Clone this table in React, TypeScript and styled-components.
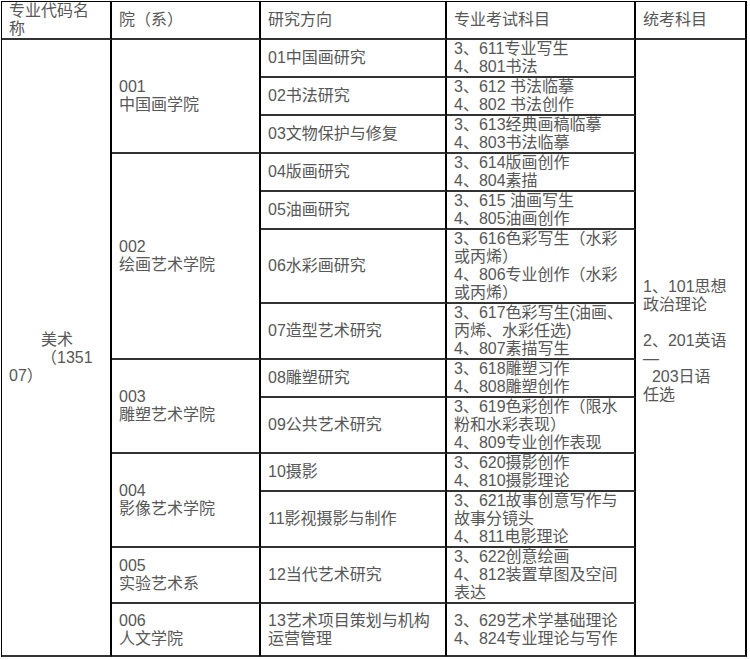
import React, { memo } from 'react';
import styled, { createGlobalStyle } from 'styled-components';

const GlobalStyle = createGlobalStyle`
  * {
    box-sizing: border-box;
  }

  body {
    margin: 0;
    background: #fff;
    font-family: "Liberation Sans", "Noto Sans CJK SC", sans-serif;
  }
`

const Table = styled.table`
  margin: 1px 0 0 1px;
  width: 746px;
  table-layout: fixed;
  border-collapse: separate;
  border-spacing: 0;
  border-top: 1px solid #000;
  border-left: 1px solid #000;
  color: #575757;
  font-size: 16px;
  line-height: 18px;
`

const HeadCell = styled.th<{ $w: number }>`
  width: ${p => p.$w}px;
  padding: 0 7px;
  border-right: 2px solid #000;
  border-bottom: 2px solid #333;
  font-weight: normal;
  text-align: left;
  vertical-align: middle;
`

const Cell = styled.td<{ $shiftTop?: number; $shiftBottom?: number }>`
  padding: ${p => p.$shiftTop || 0}px 7px ${p => p.$shiftBottom || 0}px;
  border-right: 2px solid #000;
  border-bottom: 2px solid #333;
  vertical-align: middle;
  text-align: left;
`

const Row = styled.tr<{ $h?: number }>`
  height: ${p => (p.$h ? `${p.$h}px` : 'auto')};
`

const Line = styled.span<{ $indent?: number }>`
  display: block;
  padding-left: ${p => p.$indent || 0}px;
  min-height: 18px;
`

interface Direction {
  name: string[]
  exams: string[]
}

interface School {
  code: string
  name: string
  directions: Direction[]
}

const schools: School[] = [
  {
    code: '001',
    name: '中国画学院',
    directions: [
      { name: ['01中国画研究'], exams: ['3、611专业写生', '4、801书法'] },
      { name: ['02书法研究'], exams: ['3、612 书法临摹', '4、802 书法创作'] },
      { name: ['03文物保护与修复'], exams: ['3、613经典画稿临摹', '4、803书法临摹'] },
    ],
  },
  {
    code: '002',
    name: '绘画艺术学院',
    directions: [
      { name: ['04版画研究'], exams: ['3、614版画创作', '4、804素描'] },
      { name: ['05油画研究'], exams: ['3、615 油画写生', '4、805油画创作'] },
      { name: ['06水彩画研究'], exams: ['3、616色彩写生（水彩或丙烯）', '4、806专业创作（水彩或丙烯）'] },
      { name: ['07造型艺术研究'], exams: ['3、617色彩写生(油画、丙烯、水彩任选)', '4、807素描写生'] },
    ],
  },
  {
    code: '003',
    name: '雕塑艺术学院',
    directions: [
      { name: ['08雕塑研究'], exams: ['3、618雕塑习作', '4、808雕塑创作'] },
      { name: ['09公共艺术研究'], exams: ['3、619色彩创作（限水粉和水彩表现）', '4、809专业创作表现'] },
    ],
  },
  {
    code: '004',
    name: '影像艺术学院',
    directions: [
      { name: ['10摄影'], exams: ['3、620摄影创作', '4、810摄影理论'] },
      { name: ['11影视摄影与制作'], exams: ['3、621故事创意写作与故事分镜头', '4、811电影理论'] },
    ],
  },
  {
    code: '005',
    name: '实验艺术系',
    directions: [
      { name: ['12当代艺术研究'], exams: ['3、622创意绘画', '4、812装置草图及空间表达'] },
    ],
  },
  {
    code: '006',
    name: '人文学院',
    directions: [
      { name: ['13艺术项目策划与机构', '运营管理'], exams: ['3、629艺术学基础理论', '4、824专业理论与写作'] },
    ],
  },
]

const totalRows = schools.reduce((n, s) => n + s.directions.length, 0)

const unified = ['1、101思想', '政治理论', '', '2、201英语', '—', '\u00a0\u00a0203日语', '任选']

export default memo(function App() {
  let rowIndex = 0

  return (
    <>
      <GlobalStyle />
      <Table>
        <thead>
          <tr>
            <HeadCell $w={110}>专业代码名称</HeadCell>
            <HeadCell $w={149}>院（系）</HeadCell>
            <HeadCell $w={186}>研究方向</HeadCell>
            <HeadCell $w={189}>专业考试科目</HeadCell>
            <HeadCell $w={111}>统考科目</HeadCell>
          </tr>
        </thead>
        <tbody>
          {schools.map(school =>
            school.directions.map((dir, i) => {
              const first = rowIndex === 0
              const last = rowIndex === totalRows - 1
              rowIndex += 1
              return (
                <Row key={dir.name[0]} $h={last ? 53 : undefined}>
                  {first && (
                    <Cell rowSpan={totalRows} $shiftTop={20}>
                      <Line $indent={32}>美术</Line>
                      <Line $indent={32}>（1351</Line>
                      <Line>07）</Line>
                    </Cell>
                  )}
                  {i === 0 && (
                    <Cell rowSpan={school.directions.length}>
                      <Line>{school.code}</Line>
                      <Line>{school.name}</Line>
                    </Cell>
                  )}
                  <Cell>
                    {dir.name.map(t => (
                      <Line key={t}>{t}</Line>
                    ))}
                  </Cell>
                  <Cell>
                    {dir.exams.map(t => (
                      <Line key={t}>{t}</Line>
                    ))}
                  </Cell>
                  {first && (
                    <Cell rowSpan={totalRows} $shiftBottom={14}>
                      {unified.map((t, k) => (
                        <Line key={k}>{t}</Line>
                      ))}
                    </Cell>
                  )}
                </Row>
              )
            })
          )}
        </tbody>
      </Table>
    </>
  )
})
